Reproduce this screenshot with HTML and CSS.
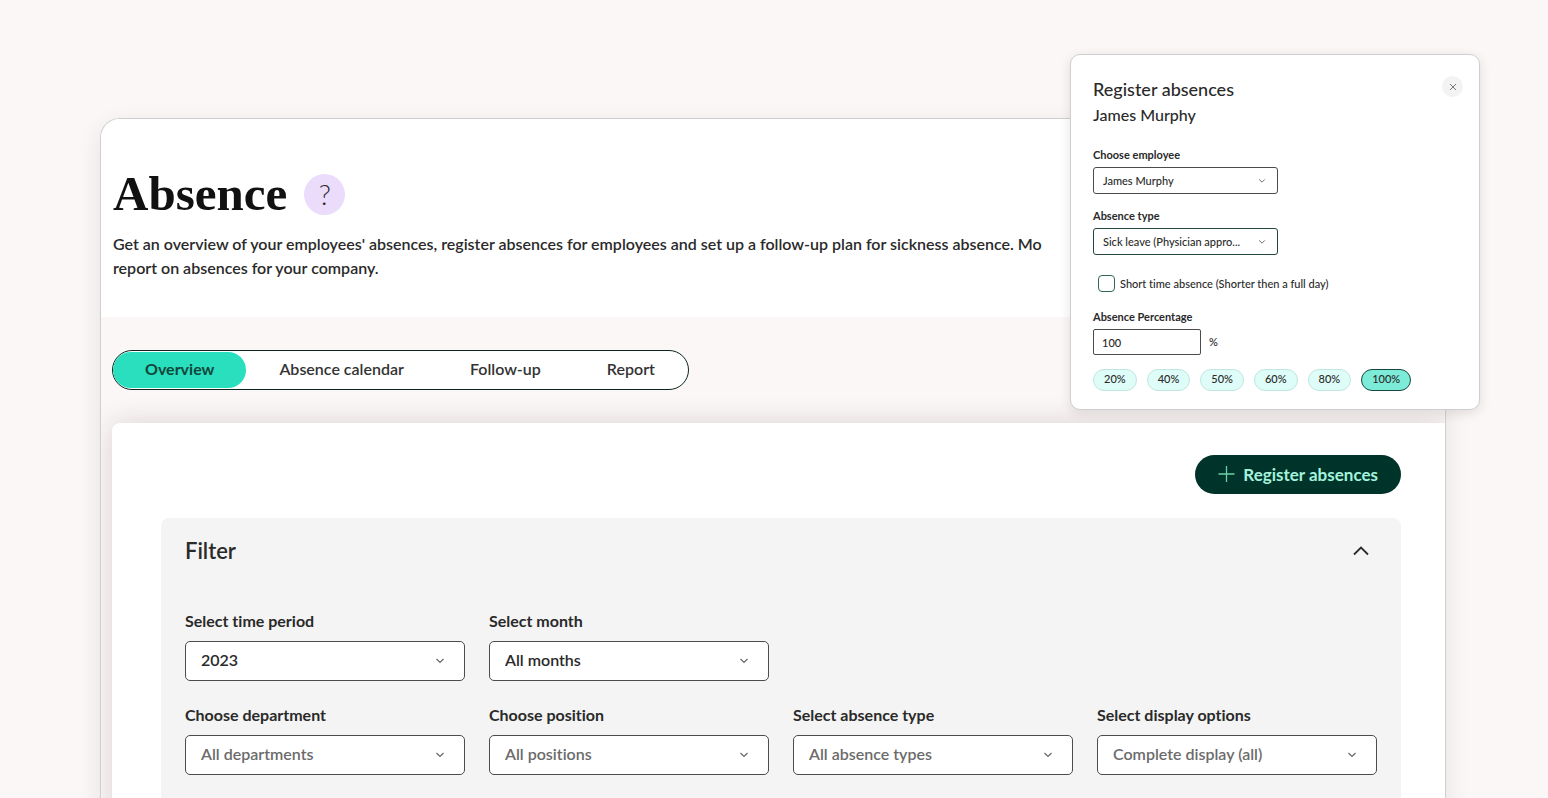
FILE: index.html
```html
<!DOCTYPE html>
<html lang="en">
<head>
<meta charset="utf-8">
<title>Absence</title>
<link rel="stylesheet" href="styles.css">
</head>
<body>
<svg class="sprite" aria-hidden="true">
  <symbol id="chevron" viewBox="0 0 10 10"><path d="M1.5 3 5 6.500 8.500 3" fill="none" stroke="currentColor" stroke-width="1.200"/></symbol>
</svg>
<div class="page">
  <main class="window">
    <header class="intro">
      <div class="title-row">
        <h1>Absence</h1>
        <button class="help" type="button" aria-label="Help">?</button>
      </div>
      <p>Get an overview of your employees' absences, register absences for employees and set up a follow-up plan for sickness absence. Mo<br>report on absences for your company.</p>
    </header>
    <nav class="tabs" aria-label="Absence views">
      <a class="tab active" href="#overview">Overview</a>
      <a class="tab" href="#calendar">Absence calendar</a>
      <a class="tab" href="#follow-up">Follow-up</a>
      <a class="tab" href="#report">Report</a>
    </nav>
    <section class="content" id="overview">
      <div class="actions">
        <button class="primary" type="button">
          <svg width="18" height="18" viewBox="0 0 18 18" aria-hidden="true"><path d="M8.500 0v16M.5 8h16" fill="none" stroke="currentColor" stroke-width="1.300"/></svg>
          Register absences
        </button>
      </div>
      <form class="filter">
        <div class="filter-head">
          <h2>Filter</h2>
          <button class="collapse" type="button" aria-label="Collapse filter">
            <svg width="18" height="12" viewBox="0 0 18 12" aria-hidden="true"><path d="M2 9.500 9 2.500l7 7" fill="none" stroke="currentColor" stroke-width="1.800"/></svg>
          </button>
        </div>
        <div class="fields">
          <div class="field">
            <label for="period">Select time period</label>
            <div class="select"><select id="period"><option>2023</option></select><svg aria-hidden="true"><use href="#chevron"/></svg></div>
          </div>
          <div class="field">
            <label for="month">Select month</label>
            <div class="select"><select id="month"><option>All months</option></select><svg aria-hidden="true"><use href="#chevron"/></svg></div>
          </div>
        </div>
        <div class="fields">
          <div class="field">
            <label for="department">Choose department</label>
            <div class="select muted"><select id="department"><option>All departments</option></select><svg aria-hidden="true"><use href="#chevron"/></svg></div>
          </div>
          <div class="field">
            <label for="position">Choose position</label>
            <div class="select muted"><select id="position"><option>All positions</option></select><svg aria-hidden="true"><use href="#chevron"/></svg></div>
          </div>
          <div class="field">
            <label for="type">Select absence type</label>
            <div class="select muted"><select id="type"><option>All absence types</option></select><svg aria-hidden="true"><use href="#chevron"/></svg></div>
          </div>
          <div class="field">
            <label for="display">Select display options</label>
            <div class="select muted"><select id="display"><option>Complete display (all)</option></select><svg aria-hidden="true"><use href="#chevron"/></svg></div>
          </div>
        </div>
      </form>
    </section>
  </main>
  <aside class="dialog" role="dialog" aria-labelledby="dialog-title">
    <div class="dialog-head">
      <div>
        <h2 id="dialog-title">Register absences</h2>
        <p>James Murphy</p>
      </div>
      <button class="close" type="button" aria-label="Close">
        <svg width="8" height="8" viewBox="0 0 8 8" aria-hidden="true"><path d="M1 1l6 6M7 1 1 7" fill="none" stroke="currentColor"/></svg>
      </button>
    </div>
    <form class="dialog-form">
      <div class="field small">
        <label for="employee">Choose employee</label>
        <div class="select"><select id="employee"><option>James Murphy</option></select><svg aria-hidden="true"><use href="#chevron"/></svg></div>
      </div>
      <div class="field small">
        <label for="absence-type">Absence type</label>
        <div class="select green"><select id="absence-type"><option>Sick leave (Physician appro...</option></select><svg aria-hidden="true"><use href="#chevron"/></svg></div>
      </div>
      <label class="check"><input type="checkbox">Short time absence (Shorter then a full day)</label>
      <div class="field small">
        <label for="percentage">Absence Percentage</label>
        <div class="percent"><input id="percentage" type="text" value="100"><span>%</span></div>
      </div>
      <div class="chips">
        <button type="button">20%</button>
        <button type="button">40%</button>
        <button type="button">50%</button>
        <button type="button">60%</button>
        <button type="button">80%</button>
        <button type="button" class="active">100%</button>
      </div>
    </form>
  </aside>
</div>
</body>
</html>
```
FILE: styles.css
```css
* {
  box-sizing: border-box;
}

body {
  margin: 0;
  overflow: hidden;
  background: #faf7f6;
  color: #2a2a2a;
  font-family: Lato, "Liberation Sans", sans-serif;
  font-size: 16px;
  line-height: 24px;
  font-weight: 600;
  font-variant-ligatures: none;
}

h1, h2, p {
  margin: 0;
}

button, input, select {
  font: inherit;
  color: inherit;
}

button {
  display: inline-flex;
  align-items: center;
  justify-content: center;
  padding: 0;
  border: 0;
  cursor: pointer;
}

.sprite {
  display: none;
}

.page {
  position: relative;
  display: flex;
  min-height: 100vh;
  padding: 118px 102px 0 100px;
}

.window {
  flex: 1;
  min-width: 0;
  display: flex;
  flex-direction: column;
  border: 1px solid #cfcfd1;
  border-bottom: 0;
  border-radius: 20px 20px 0 0;
  background: #faf7f6;
  box-shadow: 0 8px 24px rgba(60, 40, 40, 0.1);
  overflow: hidden;
}

.intro {
  padding: 44px 0 37px 12px;
  background: #fff;
  white-space: nowrap;
}

.title-row {
  display: flex;
  align-items: center;
  gap: 17px;
  margin-bottom: 7px;
}

h1 {
  font: 700 49px/62px "Liberation Serif", serif;
  color: #111;
}

.help {
  width: 41px;
  height: 41px;
  border-radius: 50%;
  background: #ecdcfc;
  font-size: 28px;
  font-weight: 300;
}

.tabs {
  align-self: flex-start;
  display: flex;
  height: 40px;
  margin: 33px 0 33px 11px;
  padding: 1px 0;
  border: 1px solid #0c2420;
  border-radius: 20px;
  background: #fff;
}

.tab {
  display: flex;
  align-items: center;
  padding: 0 33px 2px;
  border-radius: 18px;
  color: #333;
  text-decoration: none;
}

.tab.active {
  padding: 0 32px 2px;
  background: #29dfbd;
  color: #12463c;
  font-weight: 700;
}

.content {
  flex: 1;
  margin-left: 11px;
  padding: 32px 44px 0 49px;
  border-radius: 8px 0 0 0;
  background: #fff;
  box-shadow: 0 0 28px rgba(60, 30, 30, 0.16);
}

.actions {
  display: flex;
  justify-content: flex-end;
  margin-bottom: 24px;
}

.primary {
  gap: 7px;
  height: 39px;
  padding: 0 23px;
  border-radius: 20px;
  background: #00332a;
  color: #a5f3dc;
  font-size: 17px;
  font-weight: 700;
}

.primary svg {
  color: #6fcfa4;
}

.filter {
  padding: 17px 24px 32px;
  border-radius: 8px;
  background: #f4f4f4;
}

.filter-head {
  display: flex;
  align-items: center;
  justify-content: space-between;
  padding-right: 7px;
  margin-bottom: 42px;
}

.filter-head h2 {
  font-size: 22px;
  line-height: 32px;
  font-weight: 600;
}

.collapse {
  background: none;
}

.fields {
  display: grid;
  grid-template-columns: repeat(4, 1fr);
  gap: 24px;
  margin-bottom: 22px;
}

.field {
  display: grid;
  gap: 8px;
}

.field > label {
  font-weight: 700;
}

.select {
  display: grid;
  align-items: center;
}

.select > * {
  grid-area: 1 / 1;
}

.select select {
  appearance: none;
  width: 100%;
  height: 40px;
  padding: 0 40px 2px 15px;
  border: 1px solid #4c4c4c;
  border-radius: 5px;
  background: #fff;
}

.select svg {
  justify-self: end;
  width: 10px;
  height: 10px;
  margin-right: 20px;
  color: #666;
  pointer-events: none;
}

.select.muted select {
  color: #6b6b6b;
}

.dialog {
  position: absolute;
  top: 54px;
  right: 68px;
  width: 410px;
  padding: 21px 16px 18px 22px;
  border: 1px solid #cfcfd1;
  border-radius: 10px;
  background: #fff;
  box-shadow: 0 3px 12px rgba(60, 30, 30, 0.12);
}

.dialog-head {
  display: flex;
  justify-content: space-between;
  align-items: flex-start;
  margin-bottom: 19px;
}

.dialog-head h2 {
  font-size: 18px;
  line-height: 26px;
  font-weight: 500;
}

.dialog-head p {
  font-size: 16px;
  line-height: 26px;
  font-weight: 500;
}

.close {
  width: 21px;
  height: 21px;
  border-radius: 50%;
  background: #f3f3f3;
  color: #777;
}

.dialog-form {
  display: flex;
  flex-direction: column;
  font-size: 11px;
  line-height: 16px;
  font-weight: 500;
}

.small {
  width: 185px;
  gap: 4px;
  margin-bottom: 14px;
}

.small > label {
  font-weight: 700;
}

.small .select select {
  height: 27px;
  padding: 0 28px 0 9px;
  border-radius: 3px;
}

.small .select svg {
  width: 8px;
  height: 8px;
  margin-right: 12px;
}

.small .green select {
  border-color: #23473f;
}

.check {
  display: flex;
  align-items: center;
  gap: 5px;
  margin: 6px 0 17px 5px;
}

.check input {
  appearance: none;
  width: 17px;
  height: 17px;
  margin: 0;
  border: 1px solid #2f665b;
  border-radius: 4px;
}

.percent {
  display: flex;
  align-items: center;
  gap: 8px;
}

.percent input {
  width: 108px;
  height: 26px;
  padding: 0 8px;
  border: 1px solid #4c4c4c;
  border-radius: 2px;
}

.chips {
  display: flex;
  gap: 10px;
}

.chips button {
  height: 22px;
  padding: 0 10px 2px;
  border: 1px solid #bfe6df;
  border-radius: 11px;
  background: #dffdf8;
}

.chips .active {
  border-color: #17473f;
  background: #7cecd9;
}
```
